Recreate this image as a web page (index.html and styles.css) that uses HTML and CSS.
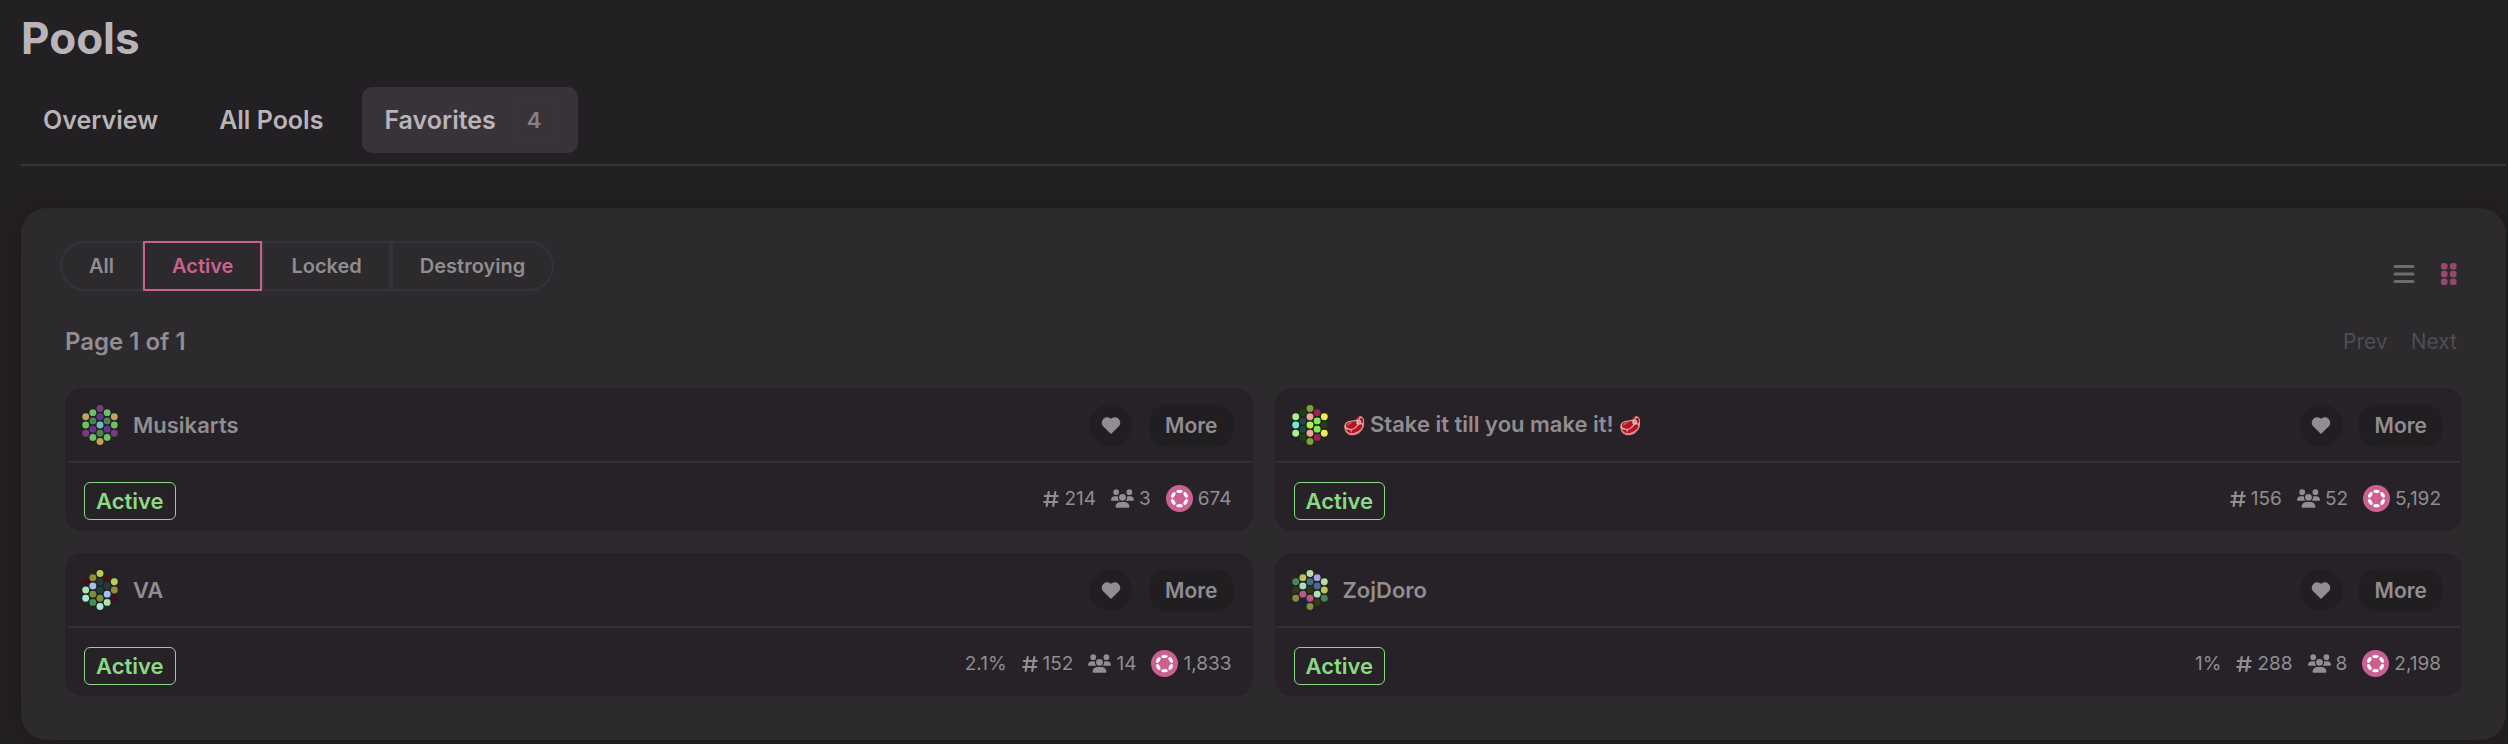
FILE: index.html
```html
<!DOCTYPE html>
<html lang="en">
<head>
    <meta charset="utf-8">
    <title>Pools</title>
    <link rel="stylesheet" href="styles.css">
</head>
<body>
    <svg class="defs" aria-hidden="true">
        <symbol id="heart" viewBox="0 0 20 17">
            <path d="M10 17L1.900 9.100A5.500 5.500 0 0 1 10 1.700A5.500 5.500 0 0 1 18.100 9.100Z"/>
        </symbol>
        <symbol id="hash" viewBox="0 0 16 16">
            <path d="M5.700 1.200L3.700 14.800M12.300 1.200l-2 13.600M1.800 5H14.800M1.200 11h13" fill="none" stroke="currentColor" stroke-width="2.200" stroke-linecap="round"/>
        </symbol>
        <symbol id="users" viewBox="0 0 640 512">
            <path d="M144 0a80 80 0 1 1 0 160A80 80 0 1 1 144 0zM512 0a80 80 0 1 1 0 160A80 80 0 1 1 512 0zM0 298.700C0 239.800 47.800 192 106.700 192h42.700c15.900 0 31 3.500 44.600 9.700-1.300 7.200-1.900 14.700-1.900 22.300 0 38.200 16.800 72.500 43.300 96H21.300C9.600 320 0 310.400 0 298.700zM405.300 320h-.7c26.600-23.500 43.300-57.800 43.300-96 0-7.600-.7-15-1.900-22.300 13.600-6.300 28.700-9.700 44.600-9.700h42.700C592.200 192 640 239.800 640 298.700c0 11.800-9.600 21.300-21.300 21.300H405.300zM224 224a96 96 0 1 1 192 0 96 96 0 1 1-192 0zM128 485.300C128 411.700 187.700 352 261.300 352h117.400C452.300 352 512 411.700 512 485.300c0 14.700-11.900 26.700-26.700 26.700H154.700c-14.700 0-26.700-11.900-26.700-26.700z"/>
        </symbol>
        <symbol id="token" viewBox="0 0 28 28">
            <circle cx="14" cy="14" r="14" fill="#cb6192"/>
            <g fill="#fff">
                <ellipse cx="14" cy="6.600" rx="3.300" ry="1.800"/>
                <ellipse cx="14" cy="21.400" rx="3.300" ry="1.800"/>
                <ellipse cx="7.600" cy="10.300" rx="3.300" ry="1.800" transform="rotate(-60 7.600 10.300)"/>
                <ellipse cx="20.400" cy="10.300" rx="3.300" ry="1.800" transform="rotate(60 20.400 10.300)"/>
                <ellipse cx="7.600" cy="17.700" rx="3.300" ry="1.800" transform="rotate(60 7.600 17.700)"/>
                <ellipse cx="20.400" cy="17.700" rx="3.300" ry="1.800" transform="rotate(-60 20.400 17.700)"/>
            </g>
        </symbol>
    </svg>

    <header class="page-header">
        <h1>Pools</h1>
        <nav class="tabs">
            <button class="tab">Overview</button>
            <button class="tab">All Pools</button>
            <button class="tab active">Favorites <span class="count">4</span></button>
        </nav>
    </header>

    <main class="panel">
        <div class="toolbar">
            <div class="filters">
                <button>All</button>
                <button class="selected">Active</button>
                <button>Locked</button>
                <button>Destroying</button>
            </div>
            <div class="layouts">
                <button aria-label="List view">
                    <svg width="22" height="22" viewBox="0 0 22 22"><path d="M2 3.500h18M2 11h18M2 18.500h18" stroke="currentColor" stroke-width="3" stroke-linecap="round"/></svg>
                </button>
                <button class="selected" aria-label="Grid view">
                    <svg width="16" height="22" viewBox="0 0 16 22" fill="currentColor"><rect x="0" y="0" width="6.500" height="6.500" rx="2.500"/><rect x="9" y="0" width="6.500" height="6.500" rx="2.500"/><rect x="0" y="7.750" width="6.500" height="6.500" rx="2.500"/><rect x="9" y="7.750" width="6.500" height="6.500" rx="2.500"/><rect x="0" y="15.500" width="6.500" height="6.500" rx="2.500"/><rect x="9" y="15.500" width="6.500" height="6.500" rx="2.500"/></svg>
                </button>
            </div>
        </div>

        <div class="pagination">
            <h4>Page 1 of 1</h4>
            <div class="pager">
                <button disabled>Prev</button>
                <button disabled>Next</button>
            </div>
        </div>

        <div class="pools">
            <section class="pool">
                <div class="pool-top">
                    <svg class="identicon" viewBox="0 0 64 64">
                        <circle class="back" cx="32" cy="32" r="32"/>
                        <circle cx="11.200" cy="20" r="5" fill="#bfa45c"/>
                        <circle cx="11.200" cy="32" r="5" fill="#6ebf66"/>
                        <circle cx="11.200" cy="44" r="5" fill="#7a3a85"/>
                        <circle cx="21.600" cy="14" r="5" fill="#6ebf66"/>
                        <circle cx="21.600" cy="26" r="5" fill="#4a8550"/>
                        <circle cx="21.600" cy="38" r="5" fill="#65368a"/>
                        <circle cx="21.600" cy="50" r="5" fill="#6ebf66"/>
                        <circle cx="32" cy="8" r="5" fill="#7a3a85"/>
                        <circle cx="32" cy="20" r="5" fill="#65368a"/>
                        <circle cx="32" cy="32" r="5" fill="#6cbcc4"/>
                        <circle cx="32" cy="44" r="5" fill="#4a8550"/>
                        <circle cx="32" cy="56" r="5" fill="#bfa45c"/>
                        <circle cx="42.400" cy="14" r="5" fill="#6ebf66"/>
                        <circle cx="42.400" cy="26" r="5" fill="#4a8550"/>
                        <circle cx="42.400" cy="38" r="5" fill="#65368a"/>
                        <circle cx="42.400" cy="50" r="5" fill="#6ebf66"/>
                        <circle cx="52.800" cy="20" r="5" fill="#bfa45c"/>
                        <circle cx="52.800" cy="32" r="5" fill="#6ebf66"/>
                        <circle cx="52.800" cy="44" r="5" fill="#7a3a85"/>
                    </svg>
                    <h4>Musikarts</h4>
                    <button class="favorite" aria-label="Remove from favorites"><svg width="20" height="17"><use href="#heart"/></svg></button>
                    <button class="more">More</button>
                </div>
                <div class="pool-bottom">
                    <span class="status">Active</span>
                    <span class="stat"><svg width="16" height="16"><use href="#hash"/></svg>214</span>
                    <span class="stat"><svg width="23" height="19"><use href="#users"/></svg>3</span>
                    <span class="stat"><svg width="27" height="27"><use href="#token"/></svg>674</span>
                </div>
            </section>

            <section class="pool">
                <div class="pool-top">
                    <svg class="identicon" viewBox="0 0 64 64">
                        <circle class="back" cx="32" cy="32" r="32"/>
                        <circle cx="11.200" cy="20" r="5" fill="#a6f090"/>
                        <circle cx="11.200" cy="32" r="5" fill="#74ecd0"/>
                        <circle cx="11.200" cy="44" r="5" fill="#a6f090"/>
                        <circle cx="21.600" cy="14" r="5" fill="#1f4014"/>
                        <circle cx="21.600" cy="26" r="5" fill="#1f4548"/>
                        <circle cx="21.600" cy="38" r="5" fill="#1f4548"/>
                        <circle cx="21.600" cy="50" r="5" fill="#1f4014"/>
                        <circle cx="32" cy="8" r="5" fill="#7ba336"/>
                        <circle cx="32" cy="20" r="5" fill="#eba892"/>
                        <circle cx="32" cy="32" r="5" fill="#b2ec52"/>
                        <circle cx="32" cy="44" r="5" fill="#eba892"/>
                        <circle cx="32" cy="56" r="5" fill="#7ba336"/>
                        <circle cx="42.400" cy="14" r="5" fill="#982650"/>
                        <circle cx="42.400" cy="26" r="5" fill="#80ee50"/>
                        <circle cx="42.400" cy="38" r="5" fill="#80ee50"/>
                        <circle cx="42.400" cy="50" r="5" fill="#982650"/>
                        <circle cx="52.800" cy="20" r="5" fill="#eeec58"/>
                        <circle cx="52.800" cy="32" r="5" fill="#1f4014"/>
                        <circle cx="52.800" cy="44" r="5" fill="#eeec58"/>
                    </svg>
                    <h4><span class="emoji">🥩</span> Stake it till you make it! <span class="emoji">🥩</span></h4>
                    <button class="favorite" aria-label="Remove from favorites"><svg width="20" height="17"><use href="#heart"/></svg></button>
                    <button class="more">More</button>
                </div>
                <div class="pool-bottom">
                    <span class="status">Active</span>
                    <span class="stat"><svg width="16" height="16"><use href="#hash"/></svg>156</span>
                    <span class="stat"><svg width="23" height="19"><use href="#users"/></svg>52</span>
                    <span class="stat"><svg width="27" height="27"><use href="#token"/></svg>5,192</span>
                </div>
            </section>

            <section class="pool">
                <div class="pool-top">
                    <svg class="identicon" viewBox="0 0 64 64">
                        <circle class="back" cx="32" cy="32" r="32"/>
                        <circle cx="11.200" cy="20" r="5" fill="#40101f"/>
                        <circle cx="11.200" cy="32" r="5" fill="#a9e6b0"/>
                        <circle cx="11.200" cy="44" r="5" fill="#a9e6d6"/>
                        <circle cx="21.600" cy="14" r="5" fill="#948c38"/>
                        <circle cx="21.600" cy="26" r="5" fill="#a6bfec"/>
                        <circle cx="21.600" cy="38" r="5" fill="#76913a"/>
                        <circle cx="21.600" cy="50" r="5" fill="#469150"/>
                        <circle cx="32" cy="8" r="5" fill="#bbcc58"/>
                        <circle cx="32" cy="20" r="5" fill="#1f3a42"/>
                        <circle cx="32" cy="32" r="5" fill="#1f3f3f"/>
                        <circle cx="32" cy="44" r="5" fill="#76913a"/>
                        <circle cx="32" cy="56" r="5" fill="#a9e6d6"/>
                        <circle cx="42.400" cy="14" r="5" fill="#401410"/>
                        <circle cx="42.400" cy="26" r="5" fill="#1f3a42"/>
                        <circle cx="42.400" cy="38" r="5" fill="#a6bfec"/>
                        <circle cx="42.400" cy="50" r="5" fill="#a9e6b0"/>
                        <circle cx="52.800" cy="20" r="5" fill="#bbcc58"/>
                        <circle cx="52.800" cy="32" r="5" fill="#948c38"/>
                        <circle cx="52.800" cy="44" r="5" fill="#40101f"/>
                    </svg>
                    <h4>VA</h4>
                    <button class="favorite" aria-label="Remove from favorites"><svg width="20" height="17"><use href="#heart"/></svg></button>
                    <button class="more">More</button>
                </div>
                <div class="pool-bottom">
                    <span class="status">Active</span>
                    <span class="stat">2.1%</span>
                    <span class="stat"><svg width="16" height="16"><use href="#hash"/></svg>152</span>
                    <span class="stat"><svg width="23" height="19"><use href="#users"/></svg>14</span>
                    <span class="stat"><svg width="27" height="27"><use href="#token"/></svg>1,833</span>
                </div>
            </section>

            <section class="pool">
                <div class="pool-top">
                    <svg class="identicon" viewBox="0 0 64 64">
                        <circle class="back" cx="32" cy="32" r="32"/>
                        <circle cx="11.200" cy="20" r="5" fill="#4a855a"/>
                        <circle cx="11.200" cy="32" r="5" fill="#34391a"/>
                        <circle cx="11.200" cy="44" r="5" fill="#8a8a3c"/>
                        <circle cx="21.600" cy="14" r="5" fill="#bfc060"/>
                        <circle cx="21.600" cy="26" r="5" fill="#a9e0c0"/>
                        <circle cx="21.600" cy="38" r="5" fill="#b85a88"/>
                        <circle cx="21.600" cy="50" r="5" fill="#1a2140"/>
                        <circle cx="32" cy="8" r="5" fill="#bfdca0"/>
                        <circle cx="32" cy="20" r="5" fill="#42708c"/>
                        <circle cx="32" cy="32" r="5" fill="#303818"/>
                        <circle cx="32" cy="44" r="5" fill="#b85a88"/>
                        <circle cx="32" cy="56" r="5" fill="#8a8a3c"/>
                        <circle cx="42.400" cy="14" r="5" fill="#a6a6e0"/>
                        <circle cx="42.400" cy="26" r="5" fill="#42708c"/>
                        <circle cx="42.400" cy="38" r="5" fill="#a9e0c0"/>
                        <circle cx="42.400" cy="50" r="5" fill="#34391a"/>
                        <circle cx="52.800" cy="20" r="5" fill="#bfdca0"/>
                        <circle cx="52.800" cy="32" r="5" fill="#bfc060"/>
                        <circle cx="52.800" cy="44" r="5" fill="#4a855a"/>
                    </svg>
                    <h4>ZojDoro</h4>
                    <button class="favorite" aria-label="Remove from favorites"><svg width="20" height="17"><use href="#heart"/></svg></button>
                    <button class="more">More</button>
                </div>
                <div class="pool-bottom">
                    <span class="status">Active</span>
                    <span class="stat">1%</span>
                    <span class="stat"><svg width="16" height="16"><use href="#hash"/></svg>288</span>
                    <span class="stat"><svg width="23" height="19"><use href="#users"/></svg>8</span>
                    <span class="stat"><svg width="27" height="27"><use href="#token"/></svg>2,198</span>
                </div>
            </section>
        </div>
    </main>
</body>
</html>
```

FILE: styles.css
```css
* {
    box-sizing: border-box;
}
body {
    margin: 0;
    padding: 8px 2px 4px 21px;
    background-color: #232023;
    color: #b9b4ba;
    font-family: Inter, "Liberation Sans", sans-serif;
}
h1, h4 {
    margin: 0;
    font-weight: 600;
}
button {
    padding: 0;
    border: none;
    background: none;
    color: inherit;
    font: inherit;
    cursor: pointer;
}
svg {
    display: block;
    fill: currentColor;
}
.defs {
    position: absolute;
    width: 0;
    height: 0;
}

/* header */
.page-header {
    border-bottom: 2px solid #39363a;
}
h1 {
    font-size: 44px;
    font-weight: 700;
    line-height: 60px;
}
.tabs {
    display: flex;
    gap: 17px;
    padding: 19px 0 11px;
}
.tab {
    display: flex;
    align-items: center;
    gap: 16px;
    height: 66px;
    padding: 0 22px;
    border-radius: 10px;
    font-size: 25px;
    font-weight: 600;
}
.tab.active {
    background-color: #383339;
}
.count {
    padding: 6px 14px;
    border: 1px solid #3a363b;
    border-radius: 8px;
    color: #858086;
    font-size: 22px;
}

/* panel */
.panel {
    margin-top: 42px;
    padding: 33px 44px 44px;
    border-radius: 26px;
    background-color: #2c2a2d;
    box-shadow: 0 2px 24px #1c191c;
    color: #918d92;
}
.toolbar {
    display: flex;
    justify-content: space-between;
    margin-left: -5px;
}
.filters {
    display: flex;
}
.filters button {
    height: 50px;
    padding: 0 27px;
    border: 2px solid #363338;
    font-size: 20px;
    font-weight: 600;
}
.filters button:first-child {
    border-radius: 25px 0 0 25px;
}
.filters button:last-child {
    border-radius: 0 25px 25px 0;
}
.filters .selected {
    border-color: #cb6192;
    color: #cb6192;
}
.layouts {
    display: flex;
    align-items: flex-end;
    gap: 26px;
    padding: 0 5px 6px 0;
    color: #6f6c70;
}
.layouts .selected {
    color: #96496f;
}
.pagination {
    display: flex;
    justify-content: space-between;
    align-items: center;
    padding: 35px 5px 30px 0;
    font-size: 24px;
    line-height: 32px;
}
.pagination h4 {
    font-size: 24px;
}
.pager {
    display: flex;
    gap: 23px;
    color: #504d51;
    font-size: 21px;
}

/* pool cards */
.pools {
    display: grid;
    grid-template-columns: repeat(2, 1fr);
    gap: 22px;
}
.pool {
    padding: 0 2px;
    border-radius: 17px;
    background-color: #272227;
}
.pool-top {
    display: flex;
    align-items: center;
    height: 75px;
    padding: 1px 17px 0 11px;
    border-bottom: 2px solid #352f35;
}
.identicon {
    width: 44px;
    height: 44px;
    margin-right: 11px;
}
.back {
    fill: #242224;
}
.pool h4 {
    flex: 1;
    font-size: 22px;
    line-height: 28px;
}
.emoji {
    font-size: 18px;
    opacity: 0.8;
}
.favorite {
    display: flex;
    align-items: center;
    justify-content: center;
    width: 42px;
    height: 42px;
    margin-right: 17px;
    border-radius: 50%;
    background-color: #201e20;
}
.more {
    height: 43px;
    padding: 0 16px;
    border-radius: 18px;
    background-color: #201e20;
    font-size: 21px;
    font-weight: 600;
}
.pool-bottom {
    display: flex;
    align-items: center;
    gap: 15px;
    height: 68px;
    padding: 3px 19px 0 17px;
}
.status {
    margin: 5px auto 0 0;
    padding: 5px 11px;
    border: 1px solid #8bd985;
    border-radius: 6px;
    color: #8bd985;
    font-size: 22px;
    font-weight: 600;
    line-height: 26px;
}
.stat {
    display: flex;
    align-items: center;
    gap: 5px;
    font-size: 19px;
}
```
